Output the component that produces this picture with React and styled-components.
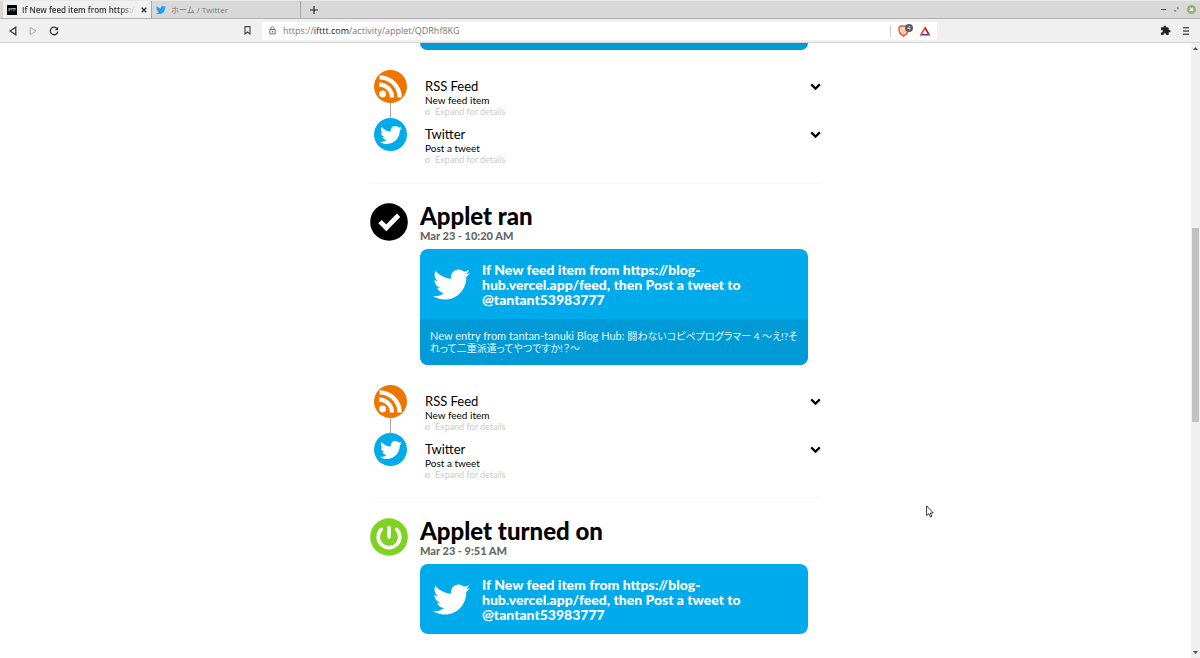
import React from "react";
import styled, { createGlobalStyle } from "styled-components";
import { FaTwitter } from "react-icons/fa";
import { MdExtension, MdLockOutline } from "react-icons/md";

const appletTitle =
	"If New feed item from https://blog-hub.vercel.app/feed, then Post a tweet to @tantant53983777";

const RssIcon = () => (
	<svg width="33" height="33" viewBox="0 0 33 33" aria-hidden="true">
		<circle cx="16.5" cy="16.5" r="16.5" fill="#ee7600" />
		<circle cx="8.6" cy="24" r="3.4" fill="#fff" />
		<path d="M5.2 14.6a12.8 12.8 0 0 1 12.8 12.8" fill="none" stroke="#fff" strokeWidth="4.2" />
		<path d="M5.6 7.4a20 20 0 0 1 20 20" fill="none" stroke="#fff" strokeWidth="4.4" />
	</svg>
);

const CheckIcon = () => (
	<svg width="38" height="38" viewBox="0 0 38 38" aria-hidden="true">
		<circle cx="19" cy="19" r="18.8" fill="#000" />
		<path d="M10 18.600l6.300 6.200L28.600 12.300" fill="none" stroke="#fff" strokeWidth="4.800" />
	</svg>
);

const PowerIcon = () => (
	<svg width="38" height="38" viewBox="0 0 38 38" aria-hidden="true">
		<circle cx="19" cy="19" r="18.8" fill="#7ed321" />
		<path
			d="M11.3 11.3a10.8 10.8 0 1 0 15.4 0M19 9.5v9.6"
			fill="none"
			stroke="#fff"
			strokeWidth="3.6"
			strokeLinecap="round"
		/>
	</svg>
);

const ChevronIcon = () => (
	<svg width="11" height="8" viewBox="0 0 11 8" aria-hidden="true">
		<path d="M1.2 1.4l4.3 4.2 4.3-4.2" fill="none" stroke="#000" strokeWidth="2.2" />
	</svg>
);

const BraveIcon = () => (
	<svg width="11" height="12" viewBox="0 0 11 12" aria-hidden="true">
		<path
			d="M2.6 1h5.800l1.700 1.800-.4 3.600c-.3 1.900-1.800 3.400-4.200 4.700C3.100 9.800 1.600 8.300 1.300 6.400L.9 2.800z"
			fill="#fde3d3"
			stroke="#f1562b"
			strokeWidth="1.500"
		/>
		<path
			d="M3.200 4.200l1.500.8-.5 1.500 1.300 1.300 1.300-1.300L6.300 5l1.500-.8M5.500 7.800v1.200"
			fill="none"
			stroke="#f58a55"
			strokeWidth=".7"
		/>
	</svg>
);

const BatIcon = () => (
	<svg width="12" height="10" viewBox="0 0 12 10" aria-hidden="true">
		<path d="M6 .2L.4 9.6l3-1.700L6 3.500z" fill="#ff4724" />
		<path d="M6 .2l5.600 9.400-3-1.700L6 3.500z" fill="#9e1f63" />
		<path d="M.4 9.600h11.200l-3-1.700H3.400z" fill="#662d91" />
	</svg>
);

const Cursor = () => (
	<svg width="8" height="13" viewBox="0 0 8 13" aria-hidden="true">
		<path
			d="M.6.800v9.800l2.200-2 1.500 3.400 1.500-.7L4.400 8h2.900z"
			fill="#fff"
			stroke="#222"
			strokeWidth=".9"
		/>
	</svg>
);

const Step = ({ icon, name, action, linked }) => (
	<StepRow>
		<StepIcon $linked={linked}>{icon}</StepIcon>
		<StepText>
			<h4>{name}</h4>
			<p>{action}</p>
			<button type="button">Expand for details</button>
		</StepText>
		<ToggleButton type="button" aria-label={`Expand ${name}`}>
			<ChevronIcon />
		</ToggleButton>
	</StepRow>
);

const Steps = () => (
	<StepList>
		<Step icon={<RssIcon />} name="RSS Feed" action="New feed item" linked />
		<Step
			icon={
				<TwitterBadge>
					<FaTwitter size={22} />
				</TwitterBadge>
			}
			name="Twitter"
			action="Post a tweet"
		/>
	</StepList>
);

const Activity = ({ icon, title, date, message, children }) => (
	<Entry>
		<EntryHead>
			{icon}
			<div>
				<EntryTitle>{title}</EntryTitle>
				<EntryDate>{date}</EntryDate>
			</div>
		</EntryHead>
		<Card>
			<CardHead href="/">
				<FaTwitter size={37} />
				<span>{appletTitle}</span>
			</CardHead>
			{message && <CardMessage>{message}</CardMessage>}
		</Card>
		{children}
	</Entry>
);

const App = () => {
	return (
		<Browser>
			<GlobalStyle />
			<TabBar>
				<Tab $active>
					<Favicon>IFTTT</Favicon>
					<TabTitle $fade>If New feed item from https://b</TabTitle>
					<TabClose type="button" aria-label="Close tab">
						<svg width="6" height="6" viewBox="0 0 6 6">
							<path d="M.7.7l4.600 4.600M5.300.7L.7 5.300" stroke="#333" strokeWidth="1.400" />
						</svg>
					</TabClose>
				</Tab>
				<Tab>
					<FaTwitter size={10} color="#1da1f2" />
					<TabTitle>ホーム / Twitter</TabTitle>
				</Tab>
				<NewTab type="button" aria-label="New tab">
					<svg width="8" height="8" viewBox="0 0 8 8">
						<path d="M4 0v8M0 4h8" stroke="#222" strokeWidth="1.200" />
					</svg>
				</NewTab>
				<WindowButtons>
					<button type="button" aria-label="Minimize">
						<svg width="5" height="9" viewBox="0 0 5 9">
							<path d="M0 4.500h5" stroke="#444" />
						</svg>
					</button>
					<button type="button" aria-label="Restore">
						<svg width="5" height="9" viewBox="0 0 5 9">
							<path d="M2.400 2.500h2.100v2.100zM.5 4.400v2.100h2.100z" fill="#555" />
						</svg>
					</button>
					<button type="button" aria-label="Close">
						<svg width="9" height="9" viewBox="0 0 9 9">
							<circle cx="4.500" cy="4.500" r="4.500" fill="#92b372" />
							<path d="M3 3l3 3M6 3L3 6" stroke="#fff" strokeWidth="1.200" />
						</svg>
					</button>
				</WindowButtons>
			</TabBar>
			<Toolbar>
				<NavButtons>
					<button type="button" aria-label="Back">
						<svg width="8" height="10" viewBox="0 0 8 10">
							<path d="M6.800 1.200v7.600L1 5z" fill="none" stroke="#333" strokeWidth="1.200" />
						</svg>
					</button>
					<button type="button" aria-label="Forward">
						<svg width="8" height="10" viewBox="0 0 8 10">
							<path d="M1.200 1.200v7.600L7 5z" fill="none" stroke="#aaa" />
						</svg>
					</button>
					<button type="button" aria-label="Reload">
						<svg width="10" height="10" viewBox="0 0 10 10">
							<path d="M8.300 3A3.800 3.800 0 1 0 8.800 5.600" fill="none" stroke="#333" strokeWidth="1.200" />
							<path d="M9.200.8v3.400H5.800z" fill="#333" />
						</svg>
					</button>
				</NavButtons>
				<AddressArea>
					<button type="button" aria-label="Bookmark">
						<svg width="7" height="9" viewBox="0 0 7 9">
							<path d="M1 .6h5v7.400L3.500 6 1 8z" fill="none" stroke="#444" strokeWidth="1.100" />
						</svg>
					</button>
					<AddressBar>
						<MdLockOutline size={9} />
						<Address href="/">
							https://<b>ifttt.com</b>/activity/applet/QDRhf8KG
						</Address>
						<Shields>
							<BraveIcon />
							<ShieldCount>4</ShieldCount>
						</Shields>
						<BatIcon />
					</AddressBar>
				</AddressArea>
				<MenuButtons>
					<button type="button" aria-label="Extensions">
						<MdExtension size={11} color="#222" />
					</button>
					<button type="button" aria-label="Menu">
						<svg width="6" height="8" viewBox="0 0 6 8">
							<path d="M0 .8h6M0 4h6M0 7.200h6" stroke="#555" strokeWidth="1.400" />
						</svg>
					</button>
				</MenuButtons>
			</Toolbar>
			<Viewport>
				<Page>
					<Column>
						<Entry>
							<CardTail />
							<Steps />
						</Entry>
						<Activity
							icon={<CheckIcon />}
							title="Applet ran"
							date="Mar 23 - 10:20 AM"
							message={
								<>
									New entry from tantan-tanuki Blog Hub:{" "}
									<span lang="ja">
										闘わないコピペプログラマー 4 ～え!?それって二重派遣ってやつですか!？～
									</span>
								</>
							}
						>
							<Steps />
						</Activity>
						<Activity icon={<PowerIcon />} title="Applet turned on" date="Mar 23 - 9:51 AM" />
					</Column>
					<Pointer>
						<Cursor />
					</Pointer>
				</Page>
				<ScrollBar>
					<svg width="5" height="3" viewBox="0 0 5 3">
						<path d="M0 3L2.500 0 5 3z" fill="#505050" />
					</svg>
					<ScrollTrack>
						<ScrollGap $size={177} />
						<ScrollThumb />
						<ScrollGap $size={228} />
					</ScrollTrack>
					<svg width="5" height="3" viewBox="0 0 5 3">
						<path d="M0 0l2.500 3L5 0z" fill="#505050" />
					</svg>
				</ScrollBar>
			</Viewport>
		</Browser>
	);
};

const GlobalStyle = createGlobalStyle`
	*, *::before, *::after {
		box-sizing: border-box;
	}
	body {
		margin: 0;
		background: #fff;
		font-family: Lato, "Noto Sans CJK JP", sans-serif;
	}
	h2, h4, p {
		margin: 0;
	}
	a {
		color: inherit;
		text-decoration: none;
	}
	button {
		display: flex;
		align-items: center;
		padding: 0;
		border: 0;
		background: none;
		font: inherit;
		color: inherit;
	}
	svg {
		display: block;
		flex: none;
	}
`;

const Browser = styled.div`
	display: flex;
	flex-direction: column;
	min-height: 100vh;
`;

const TabBar = styled.div`
	display: flex;
	height: 19px;
	padding-left: 3px;
	border-top: 1px solid #e8e8e8;
	border-bottom: 1px solid #b0b0b0;
	background: #d8d8d8;
	font-family: "Open Sans", "Noto Sans CJK JP", sans-serif;
	font-size: 8px;
`;

const Tab = styled.div`
	display: flex;
	align-items: center;
	gap: 5px;
	width: 149px;
	padding: 0 4px;
	border-right: 1px solid #a6a6a6;
	background: ${(props) => (props.$active ? "#f0f0f0" : "transparent")};
	color: ${(props) => (props.$active ? "#333" : "#7a7a7a")};
	font-weight: ${(props) => (props.$active ? 600 : 400)};
`;

const Favicon = styled.span`
	width: 10px;
	height: 10px;
	overflow: hidden;
	background: #000;
	color: #fff;
	font-size: 3px;
	line-height: 10px;
	text-align: center;
`;

const TabTitle = styled.span`
	flex: 1;
	min-width: 0;
	line-height: 12px;
	white-space: nowrap;
	mask-image: ${(props) => (props.$fade ? "linear-gradient(to right, #000 85%, transparent)" : "none")};
`;

const TabClose = styled.button`
	width: 6px;
`;

const NewTab = styled.button`
	padding: 0 9px;
`;

const WindowButtons = styled.div`
	display: flex;
	gap: 8px;
	margin-left: auto;
	padding-right: 4px;
`;

const Toolbar = styled.div`
	display: grid;
	grid-template-columns: 235px 693px 1fr;
	align-items: center;
	height: 24px;
	padding: 0 9px;
	border-bottom: 1px solid #d4d4d4;
	background: #f0f0f0;
`;

const NavButtons = styled.div`
	display: flex;
	gap: 12px;
`;

const AddressArea = styled.div`
	display: flex;
	align-items: center;
	gap: 11px;
`;

const AddressBar = styled.div`
	display: flex;
	flex: 1;
	align-items: center;
	height: 18px;
	padding: 0 6px;
	border-radius: 2px;
	background: #fff;
	color: #444;
`;

const Address = styled.a`
	flex: 1;
	margin-left: 6px;
	color: #777;
	font-family: "Open Sans", sans-serif;
	font-size: 9px;
	line-height: 12px;

	b {
		color: #222;
		font-weight: normal;
	}
`;

const Shields = styled.div`
	position: relative;
	margin-right: 10px;
	padding-left: 7px;
	border-left: 1px solid #ccc;
`;

const ShieldCount = styled.span`
	position: absolute;
	top: -1px;
	right: -4px;
	width: 8px;
	height: 8px;
	border-radius: 4px;
	background: #55606a;
	color: #fff;
	font-size: 5px;
	line-height: 8px;
	text-align: center;
`;

const MenuButtons = styled.div`
	display: flex;
	justify-content: flex-end;
	gap: 12px;
	padding-right: 2px;
`;

const Viewport = styled.div`
	display: flex;
	flex: 1;
`;

const Page = styled.main`
	position: relative;
	flex: 1;
`;

const Column = styled.div`
	max-width: 451px;
	margin: 0 auto;
`;

const Entry = styled.section`
	& + & {
		padding-top: 19px;
		border-top: 1px solid #f8f8f8;
	}
`;

const EntryHead = styled.div`
	display: flex;
	gap: 12px;
	height: 46px;
`;

const EntryTitle = styled.h2`
	font-size: 24px;
	font-weight: 900;
	line-height: 25px;
`;

const EntryDate = styled.p`
	color: #666;
	font-size: 11px;
	font-weight: 900;
	line-height: 16px;
`;

const Card = styled.div`
	margin: 0 13px 0 50px;
	overflow: hidden;
	border-radius: 8px;
	background: #00abec;
	color: #fff;
`;

const CardHead = styled.a`
	display: flex;
	align-items: center;
	gap: 12px;
	padding: 13px 60px 12px 13px;
	font-size: 14px;
	font-weight: 900;
	line-height: 15px;
`;

const CardMessage = styled.p`
	padding: 11px 10px;
	background: #009ad6;
	color: #e6f5fb;
	font-size: 11px;
	line-height: 12px;

	span {
		font-size: 10px;
		font-feature-settings: "palt";
	}
`;

const CardTail = styled.div`
	height: 7px;
	margin: 0 13px 0 50px;
	border-radius: 0 0 8px 8px;
	background: #009ad6;
`;

const StepList = styled.div`
	padding: 20px 0 32px 4px;
`;

const StepRow = styled.div`
	display: flex;
	align-items: flex-start;
`;

const StepIcon = styled.div`
	display: flex;
	flex-direction: column;
	align-items: center;
	width: 33px;

	&::after {
		display: ${(props) => (props.$linked ? "block" : "none")};
		width: 1px;
		height: 15px;
		background: #aaa;
		content: "";
	}
`;

const TwitterBadge = styled.div`
	display: flex;
	align-items: center;
	justify-content: center;
	width: 33px;
	height: 33px;
	border-radius: 50%;
	background: #00abec;
	color: #fff;
`;

const StepText = styled.div`
	flex: 1;
	height: 33px;
	margin-left: 18px;
	padding-top: 8px;

	h4 {
		font-size: 13px;
		font-weight: 400;
		line-height: 16px;
	}
	p {
		font-size: 10px;
		line-height: 13px;
	}
	button {
		gap: 5px;
		color: #ccc;
		font-size: 9px;
		line-height: 10px;
	}
	button::before {
		width: 5px;
		height: 5px;
		border: 1px solid #ccc;
		border-radius: 50%;
		content: "";
	}
`;

const ToggleButton = styled.button`
	padding: 13px 0 0;
`;

const Pointer = styled.div`
	position: absolute;
	top: 462px;
	left: 926px;
`;

const ScrollBar = styled.div`
	display: flex;
	flex-direction: column;
	align-items: center;
	width: 9px;
	padding: 4px 0;
	background: #f0f0f0;
`;

const ScrollTrack = styled.div`
	display: flex;
	flex: 1;
	flex-direction: column;
	width: 7px;
`;

const ScrollGap = styled.div`
	flex: ${(props) => props.$size};
`;

const ScrollThumb = styled.div`
	flex: 193;
	background: #c1c1c1;
`;

export default App;
